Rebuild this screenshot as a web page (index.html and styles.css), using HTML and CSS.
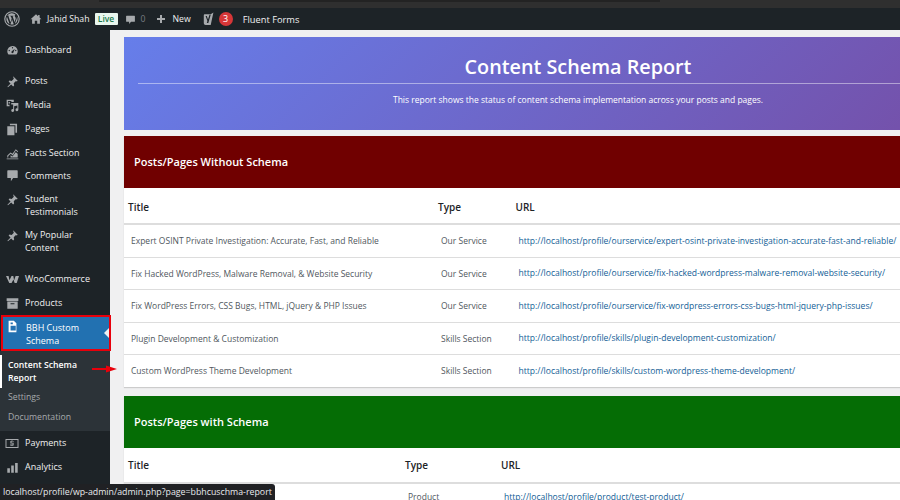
FILE: index.html
```html
<!DOCTYPE html>
<html lang="en">
<head>
<meta charset="utf-8">
<title>Content Schema Report</title>
<link rel="stylesheet" href="styles.css">
</head>
<body>
<div class="strip"><div class="tab"></div></div>
<header class="adminbar">
  <svg class="wp" viewBox="0 0 20 20"><circle cx="10" cy="10" r="9" fill="none" stroke="#a7aaad" stroke-width="1.4"/><path fill="#a7aaad" d="M3 10c0 2.800 1.600 5.200 4 6.300L3.700 7.200C3.200 8.300 3 9.100 3 10zm11.700-.4c0-.9-.3-1.500-.6-2-.4-.6-.7-1.100-.7-1.700 0-.7.500-1.300 1.200-1.300h.1A7 7 0 0 0 4 5.900h.5c.7 0 1.900-.1 1.900-.1.400 0 .4.500 0 .6 0 0-.4 0-.8.100l2.500 7.500 1.500-4.500-1.100-2.900c-.4 0-.7-.1-.7-.1-.4 0-.3-.6 0-.6 0 0 1.100.1 1.900.1.700 0 1.900-.1 1.900-.1.400 0 .4.500 0 .6 0 0-.4 0-.8.100l2.500 7.400.7-2.300c.3-.9.500-1.600.5-2.100zM10.100 10.700l-2.100 6a7 7 0 0 0 4.300-.1l-.1-.1-2.100-5.800zm6-4c0 .2.100.5.100.7 0 .7-.1 1.500-.5 2.500l-2.100 6.100A7 7 0 0 0 16.100 6.700z"/></svg>
  <svg class="bar-ic home" viewBox="0 0 20 20"><path fill="#a7aaad" d="M10 2 1 10.500h2.500V18h4.500v-5h4v5h4.500v-7.500H19l-3-2.800V3.500h-2.500v1.800z"/></svg>
  <span class="bar-t">Jahid Shah</span>
  <span class="live">Live</span>
  <svg class="bar-ic bubble" viewBox="0 0 20 20"><path fill="#a7aaad" d="M3 3h14a1 1 0 0 1 1 1v9a1 1 0 0 1-1 1h-6l-3.500 4v-4H3a1 1 0 0 1-1-1V4a1 1 0 0 1 1-1z"/></svg>
  <span class="bar-t zero">0</span>
  <svg class="bar-ic plus" viewBox="0 0 20 20"><path fill="#a7aaad" d="M8 2h4v6h6v4h-6v6H8v-6H2V8h6z"/></svg>
  <span class="bar-t new">New</span>
  <svg class="bar-ic yoast" viewBox="0 0 20 22"><path fill="#a7aaad" d="M4 3h10.500L19 0l-4.500 21H6a3 3 0 0 1-3-3V5a2 2 0 0 1 1-2z"/><path fill="#1d2327" d="M6 6h2l2 6 2.500-8h2L10.500 17.500H8l1-3z"/></svg>
  <span class="count">3</span>
  <span class="bar-t fluent">Fluent Forms</span>
</header>
<div class="shell">
  <nav class="side">
    <a class="item first"><svg class="ic" viewBox="0 0 20 20"><path d="M10 3a8 8 0 0 0-8 8c0 2 .8 3.900 2 5.200h12A8 8 0 0 0 10 3zm0 1.800a1 1 0 1 1 0 2 1 1 0 0 1 0-2zM5 11a1 1 0 1 1 0-2 1 1 0 0 1 0 2zm5.500 3a1.800 1.800 0 0 1-2-2.300l5-4.500-2.300 6.200c-.1.300-.4.500-.7.600zM15 11a1 1 0 1 1 0-2 1 1 0 0 1 0 2z"/></svg>Dashboard</a>
    <a class="item"><svg class="ic" viewBox="0 0 20 20"><path d="M11 2l7 7-1.500 1-1.200-.6-3.400 3.400.6 3.200-1.500 1.500-3-3-5 4.500-.8-.8L7 13 4 10l1.500-1.500 3.200.6 3.400-3.400L11.500 4.500z"/></svg>Posts</a>
    <a class="item"><svg class="ic" viewBox="0 0 20 20"><path d="M1 1h11v3.500H9L7.500 3H3v6h2.500v2H1zm7 5h11v10.500a2.200 2.200 0 1 1-1.500-2V10l-5 1.200v6.500a2.200 2.200 0 1 1-1.500-2V8.500H8zM5 4.500a1.300 1.300 0 1 1 0 2.600 1.300 1.300 0 0 1 0-2.600z"/></svg>Media</a>
    <a class="item"><svg class="ic" viewBox="0 0 20 20"><path d="M6 1h11v14h-2.500V3.500H6zM2 5h11v14H2z"/></svg>Pages</a>
    <a class="item"><svg class="ic" viewBox="0 0 20 20"><path d="M1 19v-1.500h18V19zm1-3v-3l5-4.500 3 2 5-7 3.500 3v1.500L15 5.500l-4.500 7.500-3.300-2.500L3.500 14v2zm5 0v-3.500l3 2.200 5-6.700 3 2.500V16z"/></svg>Facts Section</a>
    <a class="item comments"><svg class="ic" viewBox="0 0 20 20"><path d="M3 2h14a1 1 0 0 1 1 1v10a1 1 0 0 1-1 1h-6l-3.500 5v-5H3a1 1 0 0 1-1-1V3a1 1 0 0 1 1-1z"/></svg>Comments</a>
    <a class="item tall"><svg class="ic" viewBox="0 0 20 20"><path d="M11 2l7 7-1.500 1-1.200-.6-3.400 3.400.6 3.200-1.500 1.500-3-3-5 4.500-.8-.8L7 13 4 10l1.500-1.500 3.200.6 3.400-3.400L11.500 4.500z"/></svg>Student Testimonials</a>
    <a class="item tall"><svg class="ic" viewBox="0 0 20 20"><path d="M11 2l7 7-1.500 1-1.200-.6-3.400 3.400.6 3.200-1.500 1.500-3-3-5 4.500-.8-.8L7 13 4 10l1.500-1.500 3.200.6 3.400-3.400L11.500 4.500z"/></svg>My Popular Content</a>
    <a class="item woo"><svg class="ic" viewBox="0 0 20 20"><path d="M0 4.500h4l1.300 6.500L8.500 4.500h2.700l1.300 6.500 2.300-6.500H20L16.500 15.500h-3.200L11.500 10l-3 5.500H5z"/></svg>WooCommerce</a>
    <a class="item"><svg class="ic" viewBox="0 0 20 20"><path fill-rule="evenodd" d="M1 2h18v4H1zm1 5h16v11H2zm5 2.500V11h6V9.500z"/></svg>Products</a>
    <a class="item current"><svg class="ic" viewBox="0 0 20 20"><path fill-rule="evenodd" d="M4 1h8l4 4v14H4zm3 8v7h8V9zm0-5v2.500h3.500V4z"/></svg>BBH Custom Schema</a>
    <div class="sub">
      <a class="sub-on">Content Schema Report</a>
      <a class="sub-i">Settings</a>
      <a class="sub-i">Documentation</a>
    </div>
    <a class="item low"><svg class="ic pay" viewBox="0 0 20 20"><path fill-rule="evenodd" d="M0 3h20v14H0zm1.500 1.500v11h17v-11z"/><path d="M13 7H9.300v1.800h3.200v4.200H10.700v1H9.300v-1H7v-1.500h4V10H7.500V6h1.800V5h1.400v1H13z"/></svg>Payments</a>
    <a class="item low"><svg class="ic" viewBox="0 0 20 20"><path d="M2 11h4v7H2zm6-4h4v11H8zm6-4h4v15h-4z"/></svg>Analytics</a>
  </nav>
  <main class="main">
    <section class="hero">
      <h1>Content Schema Report</h1>
      <hr class="rule">
      <p>This report shows the status of content schema implementation across your posts and pages.</p>
    </section>
    <section class="card">
      <h2 class="band red">Posts/Pages Without Schema</h2>
      <table class="tbl one">
        <thead><tr><th>Title</th><th>Type</th><th>URL</th></tr></thead>
        <tbody>
          <tr><td>Expert OSINT Private Investigation: Accurate, Fast, and Reliable</td><td>Our Service</td><td><a href="#">http://localhost/profile/ourservice/expert-osint-private-investigation-accurate-fast-and-reliable/</a></td></tr>
          <tr class="short"><td>Fix Hacked WordPress, Malware Removal, &amp; Website Security</td><td>Our Service</td><td><a href="#">http://localhost/profile/ourservice/fix-hacked-wordpress-malware-removal-website-security/</a></td></tr>
          <tr><td>Fix WordPress Errors, CSS Bugs, HTML, jQuery &amp; PHP Issues</td><td>Our Service</td><td><a href="#">http://localhost/profile/ourservice/fix-wordpress-errors-css-bugs-html-jquery-php-issues/</a></td></tr>
          <tr class="short"><td>Plugin Development &amp; Customization</td><td>Skills Section</td><td><a href="#">http://localhost/profile/skills/plugin-development-customization/</a></td></tr>
          <tr><td>Custom WordPress Theme Development</td><td>Skills Section</td><td><a href="#">http://localhost/profile/skills/custom-wordpress-theme-development/</a></td></tr>
        </tbody>
      </table>
    </section>
    <section class="card">
      <h2 class="band green">Posts/Pages with Schema</h2>
      <table class="tbl two">
        <thead><tr><th>Title</th><th>Type</th><th>URL</th></tr></thead>
        <tbody>
          <tr><td></td><td>Product</td><td><a href="#">http://localhost/profile/product/test-product/</a></td></tr>
        </tbody>
      </table>
    </section>
  </main>
</div>
<svg class="arrow" viewBox="0 0 25 8"><path fill="#e8000b" d="M0 3h14V.5L25 4 14 7.500V5H0z"/></svg>
<div class="status">localhost/profile/wp-admin/admin.php?page=bbhcuschma-report</div>
</body>
</html>
```
FILE: styles.css
```css
* { box-sizing: border-box; }
html, body { margin: 0; height: 100%; overflow: hidden; }
body {
  width: 900px; height: 500px; position: relative;
  background: #f0f0f1;
  font-family: "Open Sans", "Noto Sans", sans-serif;
  display: flex; flex-direction: column;
}
.strip { height: 8px; background: #2f2f2f; flex: none; padding-left: 99px; }
.tab { width: 561px; height: 2px; background: #232323; }
.adminbar {
  height: 22px; flex: none; background: #1d2327; color: #f0f0f1;
  display: flex; align-items: center; font-size: 8.700px; padding-left: 4px;
}
.wp { width: 16px; height: 16px; margin-right: 10px; }
.bar-ic { flex: none; }
.home { width: 12px; height: 12px; margin-right: 5px; }
.live { background: #e9f6ee; color: #1a7a4c; font-size: 8.500px; line-height: 12px; width: 23px; text-align: center; margin-left: 5px; border-radius: 1px; margin-right: 7px; font-weight: 600; }
.bubble { width: 11px; height: 11px; margin-right: 5px; }
.zero { color: #787c82; margin-right: 11px; }
.plus { width: 10px; height: 10px; margin-right: 6px; }
.new { margin-right: 11px; }
.yoast { width: 12px; height: 14px; margin-right: 5px; }
.count { width: 14px; height: 14px; border-radius: 50%; background: #d63638; color: #fff; font-size: 9px; line-height: 14px; text-align: center; margin-right: 10px; }
.fluent { font-size: 9.300px; }
.shell { flex: 1; display: flex; min-height: 0; }
.side { width: 110px; flex: none; background: #1d2327; padding-top: 8px; overflow: visible; }
.item {
  display: flex; align-items: center; position: relative;
  color: #f0f0f1; font-size: 9px; line-height: 13px;
  height: 24px; padding: 0 8px 1px 25px;
}
.item.low { padding-bottom: 2px; }
.item.first { margin-bottom: 7px; }
.item.comments { height: 20px; padding-bottom: 0; }
.item.tall { height: 36px; align-items: flex-start; padding-top: 7px; padding-bottom: 0; }
.item.woo { margin-top: 10px; }
.ic { position: absolute; left: 6px; top: calc(50% - 6.500px); width: 13px; height: 13px; fill: #a7aaad; }
.tall .ic { top: 8px; }
.pay { width: 14px; left: 5px; }
.current {
  background: #2271b1; color: #fff; height: 36px;
  border: 2px solid #e8000b; margin-left: 1px; padding: 1px 14px 0 23px;
  width: 110px;
}
.current .ic { fill: #fff; left: 3px; top: 3px; }
.current::after {
  content: ""; position: absolute; right: 0; top: 11px;
  border: 5px solid transparent; border-right-color: #f0f0f1; border-left-width: 0;
}
.sub { background: #2c3338; padding: 4px 0 7.500px; }
.sub a { display: block; padding: 0 8px; font-size: 8.700px; line-height: 13px; }
.sub .sub-on { color: #fff; font-weight: 600; padding: 3.500px 6px; border-left: 2px solid #fff; }
.sub .sub-i { color: #a7aaad; margin-top: 7px; }
.sub .sub-on + .sub-i { margin-top: 2.500px; }
.main { flex: 1; min-width: 0; padding: 7px 0 0 14px; overflow: hidden; display: flex; flex-direction: column; gap: 6px; }
.hero {
  width: 908px; height: 93px; flex: none; text-align: center; color: #fff;
  background: linear-gradient(135deg, #667eea 0%, #764ba2 100%);
  padding: 15px 14px 0;
}
.hero h1 { margin: 0 0 1px; font-size: 19.800px; line-height: 30px; font-weight: 600; }
.rule { margin: 0; border: 0; height: 1px; background: rgba(255,255,255,.45); }
.hero p { margin: 9px 0 0; font-size: 8.500px; line-height: 13px; }
.card { width: 800px; flex: none; background: #fff; box-shadow: 0 1px 1px #ccc; margin-bottom: 3px; }
.band { margin: 0; height: 52px; color: #fff; font-size: 11px; font-weight: 600; line-height: 52px; padding-left: 10px; }
.red { background: #700000; }
.green { background: #056d05; }
.tbl { border-collapse: collapse; table-layout: fixed; width: 800px; font-size: 8.500px; }
.tbl th { text-align: left; height: 36px; padding: 2px 4px 0; font-size: 10px; font-weight: 600; color: #1d2327; border-bottom: 2px solid #ddd; }
.two th { height: 35px; padding-top: 0; }
.tbl td { height: 33px; padding: 0 7px; color: #50575e; border-bottom: 1px solid #ddd; white-space: nowrap; }
.tbl .short td { height: 32px; }
.two td { height: 26px; }
.tbl a { color: #135e96; text-decoration: none; font-size: 8.550px; }
.tbl tr:last-child td { border-bottom: 0; }
.one th:nth-child(1) { width: 310px; }
.one th:nth-child(2) { width: 77.500px; }
.two th:nth-child(1) { width: 277px; }
.two th:nth-child(2) { width: 96px; }
.arrow { position: absolute; left: 92px; top: 365px; width: 25px; height: 8px; }
.status {
  position: absolute; left: 0; bottom: 0; width: 275px; height: 16px; background: #202124; color: #e8eaed;
  font-size: 8.800px; line-height: 16px; padding: 0 3px; border-radius: 0 3px 0 0; white-space: nowrap;
}
```
